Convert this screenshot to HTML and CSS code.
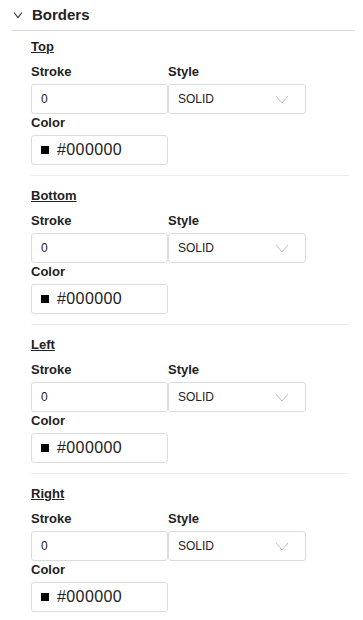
FILE: index.html
```html
<!DOCTYPE html>
<html lang="en">
<head>
    <meta charset="UTF-8">
    <meta name="viewport" content="width=device-width, initial-scale=1.0">
    <title>Borders</title>
    <link rel="stylesheet" href="styles.css">
</head>
<body>
    <div class="panel">
        <div class="panel-head">
            <svg class="caret" width="10" height="8" viewBox="0 0 10 8"><path d="M1 1.5 L5 6.5 L9 1.5" fill="none" stroke="#333" stroke-width="1.1"/></svg>
            <span>Borders</span>
        </div>

        <!-- one block per side -->
        <div class="side">
            <h3>Top</h3>
            <div class="fields">
                <label>Stroke</label>
                <label>Style</label>
                <input class="box" type="text" value="0">
                <div class="box select">SOLID
                    <svg class="arrow" width="14" height="9" viewBox="0 0 14 9"><path d="M1 1 L7 8 L13 1" fill="none" stroke="#bdbdbd" stroke-width="1"/></svg>
                </div>
                <label class="full">Color</label>
                <div class="box color"><span class="swatch"></span>#000000</div>
            </div>
        </div>

        <div class="side">
            <h3>Bottom</h3>
            <div class="fields">
                <label>Stroke</label>
                <label>Style</label>
                <input class="box" type="text" value="0">
                <div class="box select">SOLID
                    <svg class="arrow" width="14" height="9" viewBox="0 0 14 9"><path d="M1 1 L7 8 L13 1" fill="none" stroke="#bdbdbd" stroke-width="1"/></svg>
                </div>
                <label class="full">Color</label>
                <div class="box color"><span class="swatch"></span>#000000</div>
            </div>
        </div>

        <div class="side">
            <h3>Left</h3>
            <div class="fields">
                <label>Stroke</label>
                <label>Style</label>
                <input class="box" type="text" value="0">
                <div class="box select">SOLID
                    <svg class="arrow" width="14" height="9" viewBox="0 0 14 9"><path d="M1 1 L7 8 L13 1" fill="none" stroke="#bdbdbd" stroke-width="1"/></svg>
                </div>
                <label class="full">Color</label>
                <div class="box color"><span class="swatch"></span>#000000</div>
            </div>
        </div>

        <div class="side">
            <h3>Right</h3>
            <div class="fields">
                <label>Stroke</label>
                <label>Style</label>
                <input class="box" type="text" value="0">
                <div class="box select">SOLID
                    <svg class="arrow" width="14" height="9" viewBox="0 0 14 9"><path d="M1 1 L7 8 L13 1" fill="none" stroke="#bdbdbd" stroke-width="1"/></svg>
                </div>
                <label class="full">Color</label>
                <div class="box color"><span class="swatch"></span>#000000</div>
            </div>
        </div>
    </div>
</body>
</html>
```

FILE: styles.css
```css
body {
    margin: 0;
    font-family: "Liberation Sans", Arial, sans-serif;
    color: #222;
    background-color: #fff;
}
.panel {
    padding: 0 8px 0 12px;
}
.panel-head {
    display: flex;
    align-items: center;
    gap: 9px;
    padding: 5px 0 5px 1px;
    border-bottom: 1px solid #d9d9d9;
    font-size: 15px;
    font-weight: bold;
    line-height: 20px;
}
.caret {
    display: block;
}
.side {
    margin: 0 6px 0 19px;
    padding: 12px 0 10px;
    border-bottom: 1px solid #ececec;
}
.panel-head + .side {
    padding-top: 8px;
}
.side h3 {
    margin: 0 0 9px;
    font-size: 13px;
    line-height: 16px;
    text-decoration: underline;
}
.fields {
    display: grid;
    grid-template-columns: 137px 138px;
}
.fields label {
    font-size: 13px;
    font-weight: bold;
    line-height: 16px;
    margin-bottom: 4px;
}
.fields label.full {
    grid-column: 1 / 3;
    margin-top: 1px;
}
.box {
    box-sizing: border-box;
    height: 30px;
    border: 1px solid #dcdcdc;
    border-radius: 3px;
    background: #fff;
    padding: 0 9px;
    font-family: inherit;
    font-size: 12px;
    color: #222;
    outline: none;
}
.select {
    display: flex;
    align-items: center;
    justify-content: space-between;
    padding-right: 16px;
}
.arrow {
    display: block;
}
.color {
    display: flex;
    align-items: center;
    gap: 8px;
    font-size: 16px;
    letter-spacing: 0.4px;
}
.swatch {
    width: 8px;
    height: 8px;
    background: #000;
}
```
